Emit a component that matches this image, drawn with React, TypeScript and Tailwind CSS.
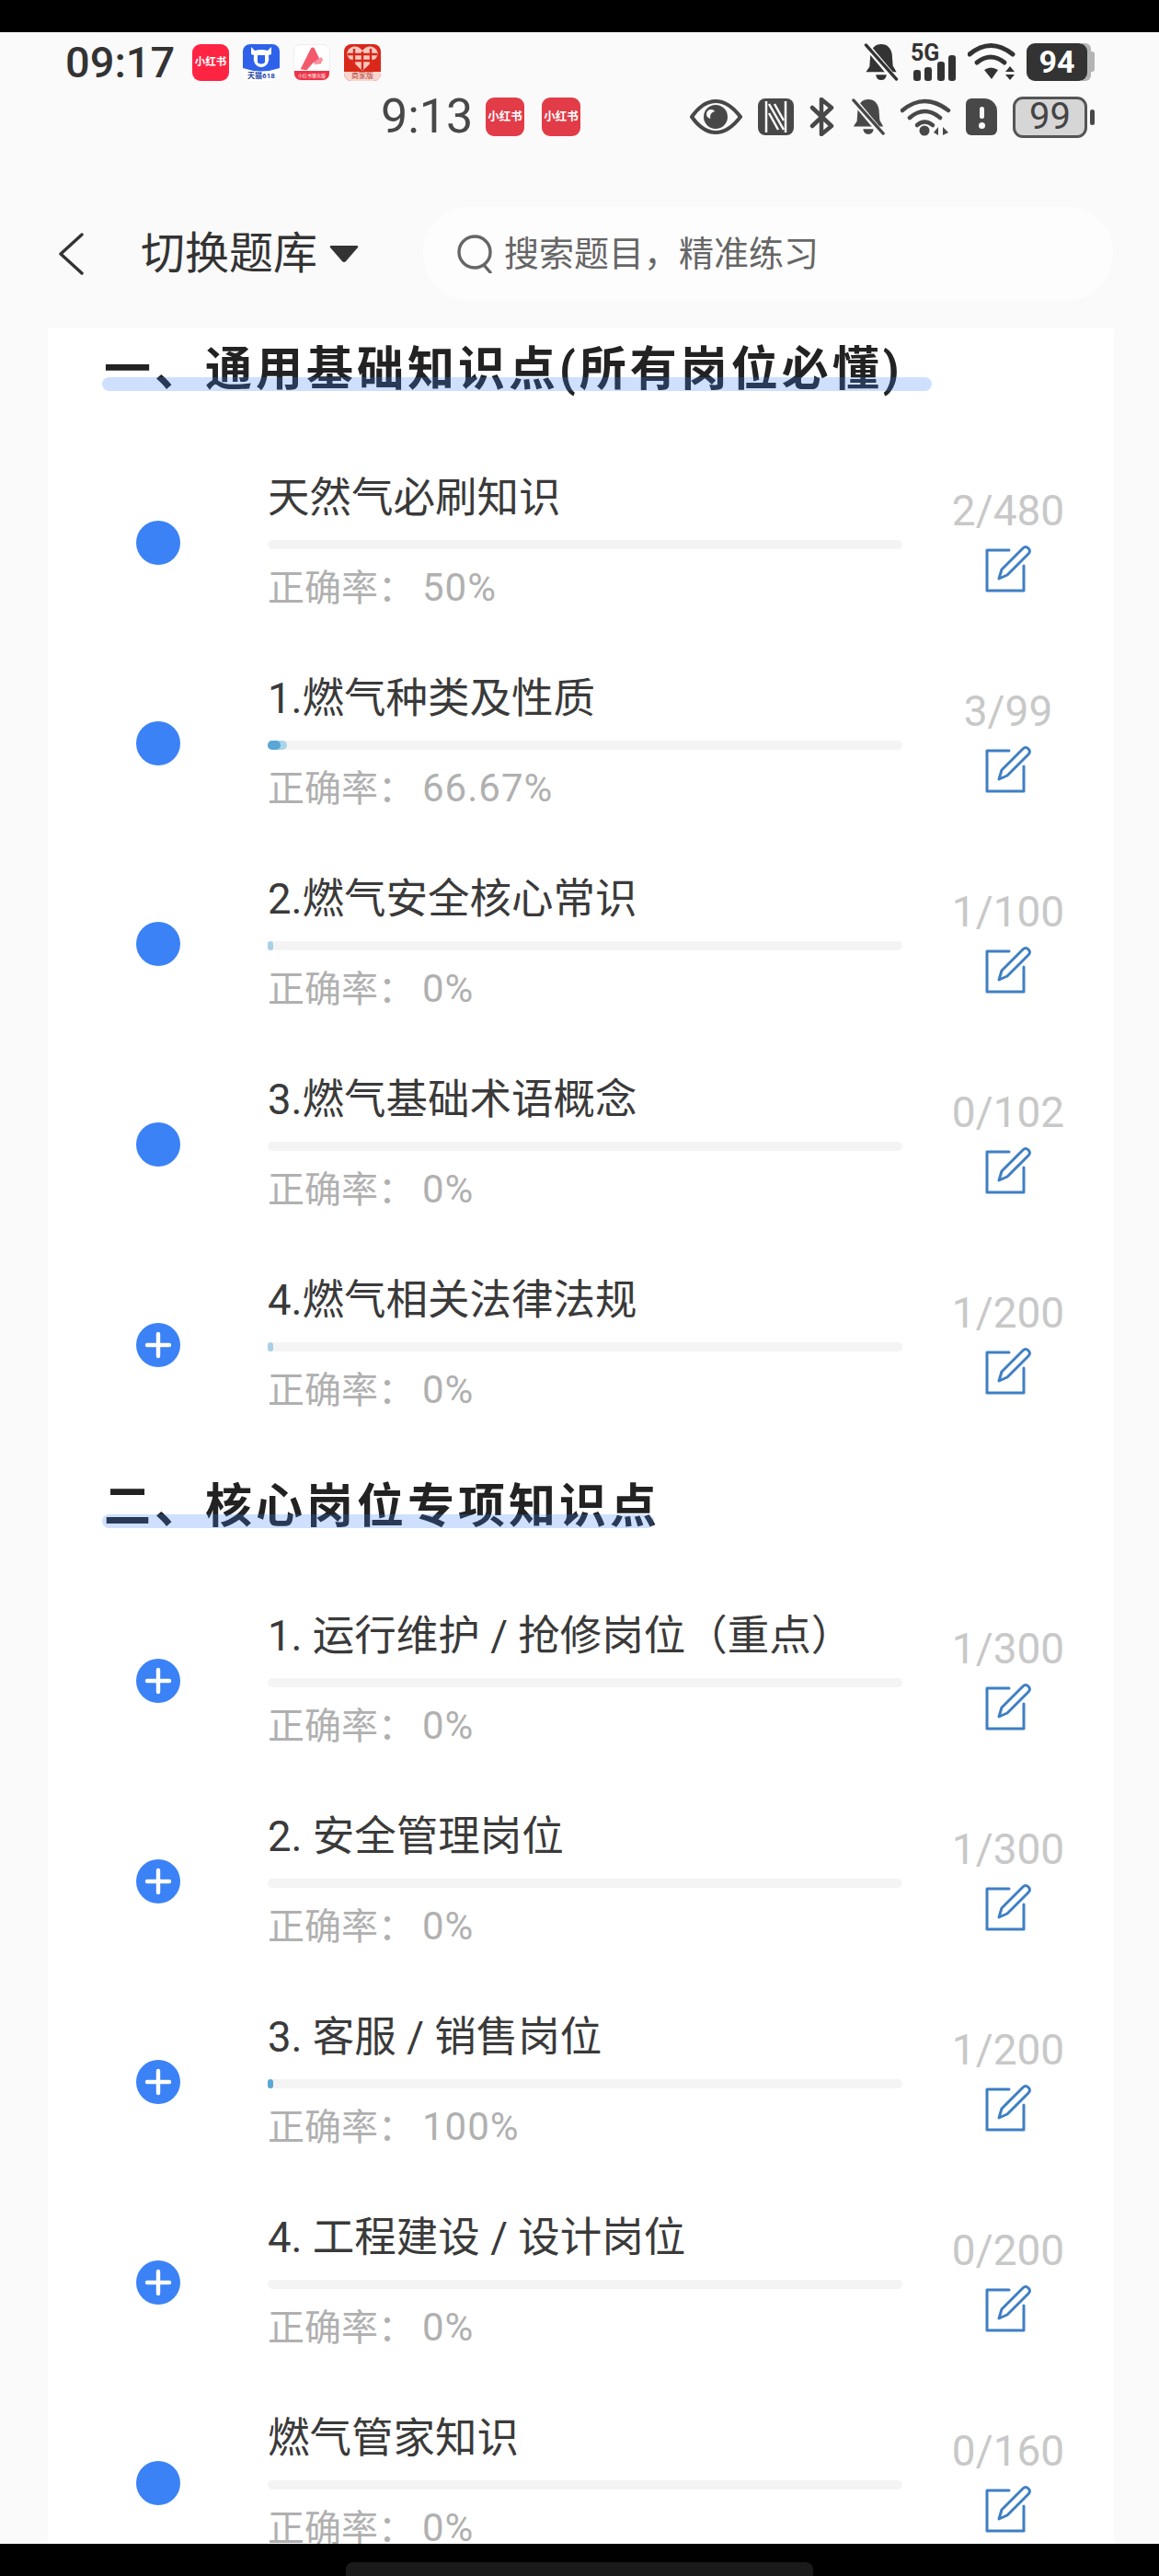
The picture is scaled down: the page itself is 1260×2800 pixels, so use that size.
const FONT = "font-['Roboto','Noto_Sans_CJK_SC',sans-serif]";

type Item = {
  title: string;
  rate: string;
  count: string;
  plus?: boolean;
  fill?: number;
  fillClass?: string;
  inner?: number;
};

const basics: Item[] = [
  { title: "天然气必刷知识", rate: "50%", count: "2/480" },
  { title: "1.燃气种类及性质", rate: "66.67%", count: "3/99", fill: 21, fillClass: "bg-[#a8d5e8]", inner: 14 },
  { title: "2.燃气安全核心常识", rate: "0%", count: "1/100", fill: 6, fillClass: "bg-[#a9d0e6]" },
  { title: "3.燃气基础术语概念", rate: "0%", count: "0/102" },
  { title: "4.燃气相关法律法规", rate: "0%", count: "1/200", plus: true, fill: 6, fillClass: "bg-[#a9d0e6]" },
];

const posts: Item[] = [
  { title: "1. 运行维护 / 抢修岗位\uFF08重点\uFF09", rate: "0%", count: "1/300", plus: true },
  { title: "2. 安全管理岗位", rate: "0%", count: "1/300", plus: true },
  { title: "3. 客服 / 销售岗位", rate: "100%", count: "1/200", plus: true, fill: 6, fillClass: "bg-[#5ba6d6]" },
  { title: "4. 工程建设 / 设计岗位", rate: "0%", count: "0/200", plus: true },
  { title: "燃气管家知识", rate: "0%", count: "0/160" },
];

function XhsIcon({ className }: { className: string }) {
  return (
    <div className={"flex items-center justify-center rounded-[9px] font-bold text-white " + className}>
      小红书
    </div>
  );
}

function MallIcon() {
  return (
    <div className="flex h-10 w-10 flex-col overflow-hidden rounded-[8px] bg-white">
      <svg viewBox="0 0 40 30" className="h-[30px] w-10">
        <path d="M0 0H40V26Q20 33 0 26Z" fill="#2f62ea" />
        <path d="M9 3l4 4q7-2 14 0l4-4v8l-3 1q1 5-1 9-3 4-7 4t-7-4q-2-4-1-9l-3-1Z" fill="#fff" />
        <path d="M16 12h8v8q-4 3-8 0Z" fill="#2f62ea" />
      </svg>
      <span className="text-center text-[8px] leading-[10px] font-bold text-[#2348a8]">天猫618</span>
    </div>
  );
}

function RedBookProIcon() {
  return (
    <div className="flex h-10 w-10 flex-col overflow-hidden rounded-[8px] border border-[#eeeeee] bg-white">
      <svg viewBox="0 0 40 28" className="h-[28px] w-[38px]">
        <path d="M7 27 L19 3 q2-2 4 0 L31 20 q-6 2-9-1 L14 28Z" fill="#f2596c" />
        <path d="M22 19q5-4 9-6l2 4q-5 4-9 5Z" fill="#f8929f" />
      </svg>
      <span className="flex-1 bg-[#ee3448] text-center text-[5px] leading-[10px] text-white">小红书聚光版</span>
    </div>
  );
}

function PddIcon() {
  return (
    <div className="flex h-10 w-10 flex-col overflow-hidden rounded-[8px] bg-[#d9281a]">
      <svg viewBox="0 0 40 30" className="h-[30px] w-10">
        <path d="M20 29 L5 15 Q1 8 7 4 Q14 0 20 7 Q26 0 33 4 Q39 8 35 15Z" fill="#f6c8bf" />
        <path d="M11 5v20M20 8v20M29 5v20M4 11h32M6 18h28" stroke="#d9281a" strokeWidth="2.4" />
      </svg>
      <span className="flex-1 bg-[#f9d5cf] text-center text-[8px] leading-[10px] text-[#b33a2c]">商家版</span>
    </div>
  );
}

function MutedBell({ className, fill }: { className: string; fill: string }) {
  return (
    <svg viewBox="0 0 38 42" className={className}>
      <path d="M19 1c7 0 11 5 12 11l1 13 4 7 H2l4-6 1-14C8 6 12 1 19 1Z" fill={fill} />
      <path d="M13 35h12q-1 6-6 6t-6-6Z" fill={fill} />
      <path d="M3 3 L35 41" stroke="#fafafa" strokeWidth="7" />
      <path d="M2 2 L36 40" stroke={fill} strokeWidth="3.4" strokeLinecap="round" />
    </svg>
  );
}

function TopStatusIcons() {
  return (
    <div className="flex items-center">
      <MutedBell className="h-[41px] w-[38px]" fill="#333333" />
      <div className="relative ml-[13px] h-[41px] w-[50px]">
        <span className="absolute -top-[1px] left-0 text-[25px] leading-[24px] font-bold text-[#333333]">5G</span>
        <svg viewBox="0 0 50 28" className="absolute bottom-0 left-0 h-7 w-[50px]">
          <rect x="3" y="16" width="8" height="12" rx="3" fill="#333333" />
          <rect x="15" y="13" width="8" height="15" rx="3" fill="#333333" />
          <rect x="29" y="7" width="8" height="21" rx="3" fill="#333333" />
          <rect x="41" y="0" width="8" height="28" rx="3" fill="#333333" />
        </svg>
      </div>
      <svg viewBox="0 0 52 42" className="ml-[12px] h-[42px] w-[52px]">
        <g fill="none" stroke="#333333" strokeWidth="5" strokeLinecap="round">
          <path d="M2 13 Q25 -6 49 13" />
          <path d="M10 22 Q25 10 40 22" />
        </g>
        <path d="M18 30 Q25 25 33 30 L26 40 Z" fill="#333333" />
        <path d="M41 32 L46 26 L51 32Z M41 35 L51 35 L46 41Z" fill="#333333" />
      </svg>
      <div className="ml-[12px] flex items-center">
        <div className="z-10 flex h-[41px] w-[66px] items-center justify-center rounded-[9px] bg-[#333333] text-[34px] leading-none font-bold text-white">
          94
        </div>
        <div className="-ml-[6px] h-[41px] w-[10px] rounded-r-[6px] bg-[#b4b4b4]" />
        <div className="h-[22px] w-[4px] rounded-r-[3px] bg-[#b4b4b4]" />
      </div>
    </div>
  );
}

function SecondStatusIcons() {
  const c = "#484848";
  return (
    <div className="flex items-center">
      <svg viewBox="0 0 57 38" className="h-[38px] w-[57px]">
        <path d="M2 19 Q14 2 28 2 T55 19 Q42 36 28 36 T2 19Z" fill="none" stroke={c} strokeWidth="4" />
        <circle cx="28" cy="19" r="13" fill={c} />
        <circle cx="23" cy="16" r="5" fill="#fafafa" />
        <circle cx="28" cy="19" r="6" fill={c} />
      </svg>
      <svg viewBox="0 0 39 40" className="ml-[17px] h-10 w-[39px]">
        <rect x="0" y="0" width="39" height="40" rx="8" fill={c} />
        <path d="M9 3v34M30 3v34" stroke="#fafafa" strokeWidth="2.5" />
        <path d="M12 6 L28 34 M18 6 L28 24 M12 16 L22 34" stroke="#fafafa" strokeWidth="2.5" fill="none" />
      </svg>
      <svg viewBox="0 0 27 42" className="ml-[17px] h-[42px] w-[27px]">
        <path d="M3 11 L24 31 L13 40 V2 L24 11 L3 31" fill="none" stroke={c} strokeWidth="4.5" strokeLinejoin="round" strokeLinecap="round" />
      </svg>
      <MutedBell className="ml-[18px] h-[40px] w-[38px]" fill={c} />
      <svg viewBox="0 0 55 42" className="ml-[16px] h-[42px] w-[55px]">
        <g fill="none" stroke={c} strokeWidth="4.5" strokeLinecap="round">
          <path d="M2 14 Q26 -6 52 14" />
          <path d="M10 22 Q26 8 43 22" />
          <path d="M18 30 Q26 23 35 30" />
        </g>
        <circle cx="26" cy="36" r="5.5" fill={c} />
        <path d="M41 41V32L36 38ZM46 41V32L52 38Z" fill={c} />
      </svg>
      <div className="relative ml-[16px] h-10 w-[34px] rounded-[6px] rounded-tr-[14px] bg-[#484848]">
        <span className="absolute top-[9px] left-[15px] h-[13px] w-[5px] rounded-full bg-[#fafafa]" />
        <span className="absolute top-[26px] left-[14px] h-[7px] w-[7px] rounded-full bg-[#fafafa]" />
      </div>
      <div className="ml-[17px] flex h-[45px] w-[81px] items-center justify-center rounded-[11px] border-[3px] border-[#555555] bg-[#d6d6d6] text-[40px] leading-none text-[#444444]">
        99
      </div>
      <div className="ml-[3px] h-[17px] w-[5px] rounded-[3px] bg-[#484848]" />
    </div>
  );
}

function EditIcon() {
  return (
    <svg viewBox="0 0 50 52" className="h-[52px] w-[50px]" fill="none" stroke="#3f7fc4" strokeWidth="3" strokeLinejoin="round" strokeLinecap="round">
      <path d="M26 6H2V50H42V23" />
      <path d="M15 37L18 27L41 4Q44 1 47 4T47 10L24 33Z" />
    </svg>
  );
}

function Row({ item }: { item: Item }) {
  return (
    <div className="flex h-[218px]">
      <div className="flex w-[239px] shrink-0 items-center justify-center">
        <div className="flex h-12 w-12 items-center justify-center rounded-full bg-[#3b82f6]">
          {item.plus && (
            <svg viewBox="0 0 30 30" className="h-[30px] w-[30px]">
              <path d="M15 3V27M3 15H27" stroke="#fff" strokeWidth="4.4" strokeLinecap="round" />
            </svg>
          )}
        </div>
      </div>
      <div className="w-[690px] shrink-0 pt-[31px]">
        <div className="h-[60px] text-[45.5px] leading-[60px] whitespace-nowrap text-[#3a3a3a]">{item.title}</div>
        <div className="relative mt-[15px] h-[10px] rounded-full bg-[#f4f4f4]">
          {item.fill ? (
            <div className={"absolute inset-y-0 left-0 rounded-full " + item.fillClass} style={{ width: item.fill }} />
          ) : null}
          {item.inner ? (
            <div className="absolute inset-y-0 left-0 rounded-full bg-[#5ba6d6]" style={{ width: item.inner }} />
          ) : null}
        </div>
        <div className="mt-[14px] h-[56px] text-[40px] leading-[56px] whitespace-nowrap text-[#b0b0b0]">
          {"正确率\uFF1A"}
          <span className="ml-[8px] text-[42px] tracking-[1px]">{item.rate}</span>
        </div>
      </div>
      <div className="flex flex-1 flex-col items-center pt-[49px]">
        <div className="h-[50px] text-[46px] leading-[50px] text-[#c8c8c8]">{item.count}</div>
        <div className="mt-[12px]">
          <EditIcon />
        </div>
      </div>
    </div>
  );
}

function Heading({ text, barWidth }: { text: string; barWidth: number }) {
  return (
    <div className="relative ml-[61px] h-[60px] text-[51px] leading-[60px] font-bold tracking-[4px] whitespace-nowrap text-[#222222]">
      {text}
      <div className="absolute top-[38px] -left-[2px] h-[15px] rounded-full bg-[#3b82f6]/25" style={{ width: barWidth }} />
    </div>
  );
}

export default function App() {
  return (
    <div className={"flex h-[2800px] w-[1260px] flex-col overflow-hidden bg-[#fafafa] " + FONT}>
      <div className="h-[35px] shrink-0 bg-black" />

      <header className="h-[322px] shrink-0">
        <div className="flex h-[53px] items-end justify-between pr-[70px] pl-[71px]">
          <div className="flex items-center">
            <span className="w-[138px] text-[47px] leading-[41px] font-medium text-[#333333]">09:17</span>
            <div className="flex gap-[15px]">
              <XhsIcon className="h-10 w-10 bg-[#ff2442] text-[11.5px]" />
              <MallIcon />
              <RedBookProIcon />
              <PddIcon />
            </div>
          </div>
          <TopStatusIcons />
        </div>
        <div className="mt-[15px] flex h-[48px] items-center justify-between pr-[70px] pl-[414px]">
          <div className="flex items-center">
            <span className="w-[114px] text-[52px] leading-none text-[#484848]">9:13</span>
            <div className="flex gap-[19px]">
              <XhsIcon className="h-[42px] w-[42px] bg-[#e23c48] text-[12.5px]" />
              <XhsIcon className="h-[42px] w-[42px] bg-[#e23c48] text-[12.5px]" />
            </div>
          </div>
          <SecondStatusIcons />
        </div>
        <div className="mt-[74px] flex items-center">
          <svg viewBox="0 0 28 46" className="ml-[63px] h-[46px] w-[28px]" fill="none" stroke="#333333" strokeWidth="3.4" strokeLinecap="round" strokeLinejoin="round">
            <path d="M26 2L3 23L26 44" />
          </svg>
          <span className="ml-[62px] text-[48px] leading-[60px] text-[#333333]">切换题库</span>
          <svg viewBox="0 0 32 20" className="ml-[13px] h-5 w-8">
            <path d="M2 1H30Q32 1 31 3L18 18Q16 20 14 18L1 3Q0 1 2 1Z" fill="#333333" />
          </svg>
          <div className="ml-[70px] flex h-[102px] w-[750px] items-center rounded-[51px] bg-[#fdfdfd] pl-[37px]">
            <svg viewBox="0 0 40 42" className="h-[42px] w-10" fill="none" stroke="#666666" strokeWidth="3.4" strokeLinecap="round">
              <circle cx="19" cy="19" r="17" />
              <path d="M29 33L36 41" />
            </svg>
            <span className="ml-[11px] text-[38px] leading-none text-[#666666]">{"搜索题目\uFF0C精准练习"}</span>
          </div>
        </div>
      </header>

      <main className="ml-[52px] w-[1159px] flex-1 overflow-hidden bg-white">
        <div className="flex h-[124px] items-start pt-[15px]">
          <Heading text="一、通用基础知识点(所有岗位必懂)" barWidth={902} />
        </div>
        {basics.map((item) => (
          <Row key={item.title} item={item} />
        ))}
        <div className="flex h-[147px] items-start pt-[37px]">
          <Heading text="二、核心岗位专项知识点" barWidth={600} />
        </div>
        {posts.map((item) => (
          <Row key={item.title} item={item} />
        ))}
      </main>

      <footer className="flex h-[35px] shrink-0 items-end justify-center bg-black">
        <div className="h-[15px] w-[508px] rounded-t-[8px] bg-[#1a1a1a]" />
      </footer>
    </div>
  );
}
